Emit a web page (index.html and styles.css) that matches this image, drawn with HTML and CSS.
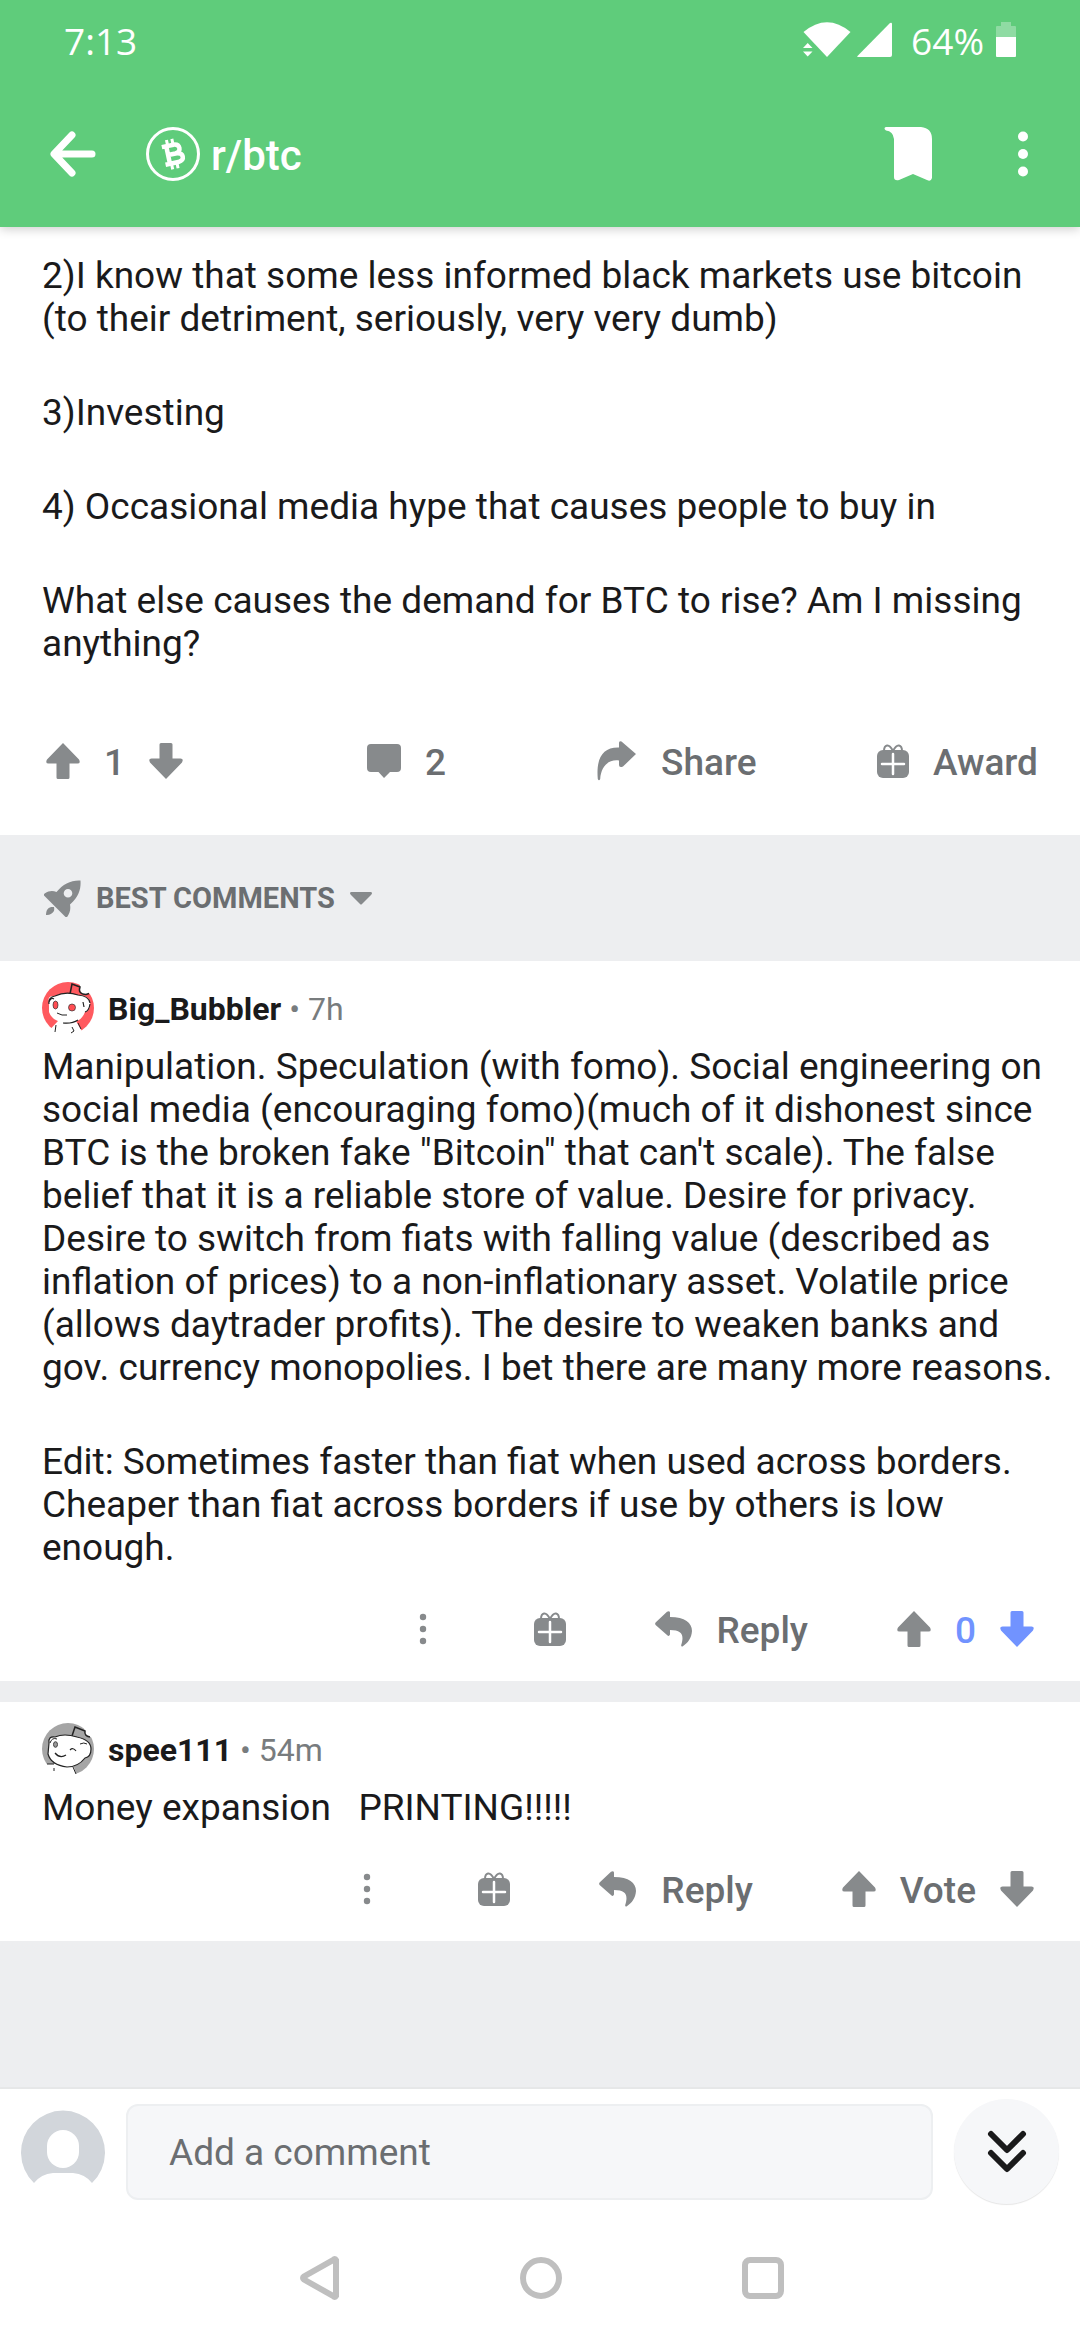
FILE: index.html
```html
<!DOCTYPE html>
<html lang="en">
<head>
<meta charset="utf-8">
<meta name="viewport" content="width=device-width, initial-scale=1">
<title>r/btc</title>
<link rel="stylesheet" href="styles.css">
</head>
<body>
<svg class="sprite" aria-hidden="true">
  <symbol id="up" viewBox="0 0 34 36"><path d="M17 0 33 16.500Q35 20.500 31.500 20.500H23.500V34.500Q23.500 36 22 36H12Q10.500 36 10.500 34.500V20.500H2.500Q-1 20.500 1 16.500Z"/></symbol>
  <symbol id="down" viewBox="0 0 34 36"><path d="M17 36 33 19.500Q35 15.500 31.500 15.500H23.500V1.500Q23.500 0 22 0H12Q10.500 0 10.500 1.500V15.500H2.500Q-1 15.500 1 19.500Z"/></symbol>
  <symbol id="bubble" viewBox="0 0 34 34"><path d="M4 0H30Q34 0 34 4V24Q34 28 30 28H23L17 34 11.500 28H4Q0 28 0 24V4Q0 0 4 0Z"/></symbol>
  <symbol id="share" viewBox="0 0 40 40"><path d="M22 2Q22 -.5 24.500 .6L39 13 26 25.500Q22 27 22 24V19.500C11 18 4 26 3.200 38Q2 40.500 .8 38C-1 18 5 6 22 6.500Z"/></symbol>
  <symbol id="reply" viewBox="0 0 38 36"><path d="M15 1.500V6C30 6 37 12 37 20C36.500 27 33 32 27.500 35.500Q26 36 26.200 34C29 25 28 19 15 19V23.500Q14 26 12 24L.6 14Q-.4 12.800 .6 11.500L12 .8Q14.500 -.8 15 1.500Z"/></symbol>
  <symbol id="gift" viewBox="0 0 32 34"><rect y="6" width="32" height="28" rx="6"/><path d="M7 7Q7 2 10 1.500Q13 1 16 7Q19 1 22 1.500Q25 2 25 7" fill="none" stroke="currentColor" stroke-width="2"/><path d="M5 20H27M16 10V30" stroke="#fff" stroke-width="2.500" stroke-linecap="round"/></symbol>
  <symbol id="dots" viewBox="0 0 8 32"><circle cx="4" cy="4" r="3.200"/><circle cx="4" cy="16" r="3.200"/><circle cx="4" cy="28" r="3.200"/></symbol>
</svg>

<header class="top">
  <div class="status">
    <span>7:13</span>
    <div class="status-icons">
      <svg width="48" height="36" viewBox="0 0 48 36"><path d="M24 35 .5 10Q24-9.500 47.500 10Z"/><path d="M0 26 4.700 21 9.500 26ZM0 29.500H9.500L4.700 34.500Z" stroke="#5fcc7b" stroke-width="5" paint-order="stroke"/></svg>
      <svg width="36" height="36" viewBox="0 0 36 36"><path d="M0 34.500 33 1Q35 0 35 2V33Q35 35 33 35H1Z"/></svg>
      <span class="percent">64%</span>
      <svg width="20" height="36" viewBox="0 0 20 36"><path d="M0 15V5Q0 4 1 4H5V0H15V4H19Q20 4 20 5V15Z" opacity=".3"/><path d="M0 15H20V34Q20 35 19 35H1Q0 35 0 34Z"/></svg>
    </div>
  </div>
  <nav class="bar">
    <button class="plain" aria-label="Back"><svg width="46" height="46" viewBox="0 0 46 46"><path d="M22 4 4 23 22 42M5 23H42" fill="none" stroke="currentColor" stroke-width="7" stroke-linecap="round" stroke-linejoin="round"/></svg></button>
    <a class="sub" href="#">
      <svg width="54" height="54" viewBox="0 0 54 54"><circle cx="27" cy="27" r="25.500" fill="none" stroke="currentColor" stroke-width="3"/><g transform="rotate(-12 27 27)" fill="none" stroke="currentColor"><path d="M17.500 18H29.500Q34.500 18.500 34.500 22.500T29.500 27H22M29.500 27Q36 27.500 36 31.500T30.500 36H17.500M22 18V36" stroke-width="4.500"/><path d="M23.500 12V18M29 12V18M23.500 36V42M29 36V42" stroke-width="3"/></g></svg>
      <span>r/btc</span>
    </a>
    <button class="plain" aria-label="Save"><svg width="50" height="54" viewBox="0 0 50 54"><path d="M2 0H37Q48 1 48 12V51Q47 55 43 53L29 47 15 53Q10 54 10 50V12Q9 4 2 3.500Q-1 1 2 0Z"/></svg></button>
    <button class="plain more" aria-label="More options"><svg width="10" height="46" viewBox="0 0 10 46"><circle cx="5" cy="5.500" r="5"/><circle cx="5" cy="23" r="5"/><circle cx="5" cy="40.500" r="5"/></svg></button>
  </nav>
</header>

<main class="feed">
  <article class="post">
    <div class="copy">
      <p>2)I know that some less informed black markets use bitcoin (to their detriment, seriously, very very dumb)</p>
      <p>3)Investing</p>
      <p>4) Occasional media hype that causes people to buy in</p>
      <p>What else causes the demand for BTC to rise? Am I missing anything?</p>
    </div>
    <div class="post-actions">
      <div class="votes">
        <button class="plain" aria-label="Upvote"><svg width="34" height="36"><use href="#up"/></svg></button>
        <span>1</span>
        <button class="plain" aria-label="Downvote"><svg width="34" height="36"><use href="#down"/></svg></button>
      </div>
      <button class="plain action"><svg width="34" height="34"><use href="#bubble"/></svg>2</button>
      <button class="plain action"><svg width="40" height="40"><use href="#share"/></svg>Share</button>
      <button class="plain action"><svg width="32" height="34"><use href="#gift"/></svg>Award</button>
    </div>
  </article>

  <button class="plain sort">
    <svg width="37" height="37" viewBox="0 0 37 37"><path fill-rule="evenodd" d="M36.500 .5C37 8 35.500 16 26 24.500C27 30 25.500 33 23.500 36.500Q22 37.500 21 36.500L0 15.500Q-.5 14 1 13.300C5 10.500 9 10.500 12.500 12C19 4 27 0 36.500 .5ZM24 9A4.300 4.300 0 1 0 24 17.600A4.300 4.300 0 1 0 24 9Z"/><path d="M2 35C2 29 5 26.500 10 27Q10.500 29 10 31Q7 35.500 2 35Z"/></svg>
    BEST COMMENTS
    <svg width="22" height="13" viewBox="0 0 22 13"><path d="M1 0H21Q23 1 21 3L12 12Q11 13 10 12L1 3Q-1 1 1 0Z"/></svg>
  </button>

  <article class="comment">
    <header class="byline">
      <svg width="54" height="52" viewBox="0 0 54 52"><circle cx="26" cy="26" r="26" fill="#ff5a5f"/><path d="M38 3Q36 12 44 12.500L47 11.500L54 12V0H38Z" fill="#fff"/><path d="M28 12 30 2 38 5Q35.500 12 44 12.500L47 11.500" fill="none" stroke="#222" stroke-width="1.500"/><path d="M9 46.500 16 39H34L39.500 48.500L38 52H10Z" fill="#fff"/><path d="M7 20Q5 13 13 14Q22 9 36 13Q49 14 48 22Q48 29 43 30Q39 41 26 41Q10 40 7 30Z" fill="#fff"/><path d="M7 22Q6 15 13 14Q24 9 36 13Q47 14 48 21M48 22Q47 29 43 30M21 41Q30 42 36 38M7 20Q9 15 12 17M41 20 42 25" fill="none" stroke="#222" stroke-width="1.200"/><ellipse cx="13.500" cy="23" rx="2.500" ry="4" fill="#ff4d52" stroke="#333" stroke-width=".7"/><circle cx="30" cy="25.500" r="3.500" fill="#ff4d52" stroke="#333" stroke-width=".7"/><path d="M15 31Q20 34 25 33M14 43 13 50M36 41 39 47M30 45 32 49 29 51" fill="none" stroke="#222"/></svg>
      <a class="author" href="#">Big_Bubbler</a><span>• 7h</span>
    </header>
    <div class="copy">
      <p>Manipulation. Speculation (with fomo). Social engineering on social media (encouraging fomo)(much of it dishonest since BTC is the broken fake "Bitcoin" that can't scale). The false belief that it is a reliable store of value. Desire for privacy. Desire to switch from fiats with falling value (described as inflation of prices) to a non-inflationary asset. Volatile price (allows daytrader profits). The desire to weaken banks and gov. currency monopolies. I bet there are many more reasons.</p>
      <p>Edit: Sometimes faster than fiat when used across borders. Cheaper than fiat across borders if use by others is low enough.</p>
    </div>
    <div class="comment-actions">
      <button class="plain dots" aria-label="More"><svg width="8" height="32"><use href="#dots"/></svg></button>
      <button class="plain" aria-label="Award"><svg width="32" height="34"><use href="#gift"/></svg></button>
      <button class="plain action"><svg width="38" height="36"><use href="#reply"/></svg>Reply</button>
      <div class="votes">
        <button class="plain" aria-label="Upvote"><svg width="34" height="36"><use href="#up"/></svg></button>
        <span class="voted">0</span>
        <button class="plain voted" aria-label="Downvote"><svg width="34" height="36"><use href="#down"/></svg></button>
      </div>
    </div>
  </article>

  <article class="comment">
    <header class="byline">
      <svg width="54" height="52" viewBox="0 0 54 52"><circle cx="26" cy="26" r="26" fill="#a5a5a5"/><path d="M42 5 43 8Q42 13 48 14H54V0H42Z" fill="#fff"/><path d="M30 13 33 4 43 8Q42 13 48 14" fill="none" stroke="#222" stroke-width="1.500"/><path d="M4 41H31L34.500 52H8Z" fill="#fff"/><path d="M7 20Q6 13 13 14Q22 10 35 14Q49 17 49 26Q49 34 43 35Q36 44 25 44Q9 42 6 31Z" fill="#fff" stroke="#222" stroke-width="1.200"/><path d="M8 20Q10 14 15 16M5 41H12M31 44 34 51M12 45V48M38 21Q42 19 45 21" fill="none" stroke="#222"/><ellipse cx="13.500" cy="21.500" rx="2" ry="2.800" fill="#999" stroke="#444"/><path d="M13 30Q18 36 24 32M28 27Q31 24 34 28" fill="none" stroke="#222" stroke-width="1.200"/></svg>
      <a class="author" href="#">spee111</a><span>• 54m</span>
    </header>
    <div class="copy">
      <p>Money expansion &nbsp; PRINTING!!!!!</p>
    </div>
    <div class="comment-actions">
      <button class="plain dots" aria-label="More"><svg width="8" height="32"><use href="#dots"/></svg></button>
      <button class="plain" aria-label="Award"><svg width="32" height="34"><use href="#gift"/></svg></button>
      <button class="plain action"><svg width="38" height="36"><use href="#reply"/></svg>Reply</button>
      <div class="votes">
        <button class="plain" aria-label="Upvote"><svg width="34" height="36"><use href="#up"/></svg></button>
        <span>Vote</span>
        <button class="plain" aria-label="Downvote"><svg width="34" height="36"><use href="#down"/></svg></button>
      </div>
    </div>
  </article>
</main>

<footer class="bottom">
  <form class="composer">
    <svg width="84" height="84" viewBox="0 0 84 84"><path d="M13 73A42 42 0 1 1 71 73Q64 64 52 63H32Q20 64 13 73Z" fill="#d2d6db"/><rect x="26" y="20" width="32" height="38" rx="16" fill="#fff"/></svg>
    <input type="text" placeholder="Add a comment" aria-label="Add a comment">
    <button class="plain jump" type="button" aria-label="Next comment"><svg width="40" height="44" viewBox="0 0 40 44"><path d="M4 4 20 20 36 4M4 23 20 39 36 23" fill="none" stroke="currentColor" stroke-width="6" stroke-linecap="round" stroke-linejoin="round"/></svg></button>
  </form>
  <nav class="system">
    <button class="plain" aria-label="System back"><svg width="40" height="44" viewBox="0 0 40 44"><path d="M36 4V40Q35 42 33 40L4 23.500Q2 22 4 20.500L33 4Q35 2 36 4Z" fill="none" stroke="currentColor" stroke-width="6"/></svg></button>
    <button class="plain" aria-label="Home"><svg width="42" height="42" viewBox="0 0 42 42"><circle cx="21" cy="21" r="18" fill="none" stroke="currentColor" stroke-width="6"/></svg></button>
    <button class="plain" aria-label="Recent apps"><svg width="42" height="42" viewBox="0 0 42 42"><rect x="3" y="3" width="36" height="36" rx="5" fill="none" stroke="currentColor" stroke-width="6"/></svg></button>
  </nav>
</footer>
</body>
</html>
```
FILE: styles.css
```css
* {
  box-sizing: border-box;
}

body {
  margin: 0;
  min-height: 100vh;
  display: flex;
  flex-direction: column;
  background: #edeef0;
  color: #1a1a1b;
  font: 37px/43px Roboto, sans-serif;
}

svg {
  display: block;
  flex: none;
  fill: currentColor;
}

.sprite {
  position: absolute;
  width: 0;
  height: 0;
}

a {
  color: inherit;
  text-decoration: none;
}

p {
  margin: 0;
}

.plain {
  display: flex;
  align-items: center;
  padding: 0;
  border: 0;
  background: none;
  color: inherit;
  font: inherit;
}

/* Top bar */
.top {
  position: relative;
  background: #5fcc7b;
  color: #fff;
  box-shadow: 0 2px 10px rgba(0, 0, 0, 0.2);
}

.status {
  display: flex;
  align-items: center;
  justify-content: space-between;
  height: 80px;
  padding: 0 64px;
  font: 400 37px/43px "Open Sans", "Noto Sans", sans-serif;
}

.status-icons {
  display: flex;
  align-items: center;
  gap: 6px;
}

.percent {
  margin: 0 6px 0 12px;
}

.bar {
  display: flex;
  align-items: center;
  height: 147px;
  padding: 0 52px 0 50px;
}

.sub {
  flex: 1;
  display: flex;
  align-items: center;
  gap: 11px;
  margin-left: 50px;
  font-size: 42px;
  font-weight: 500;
}

.sub span {
  padding-top: 3px;
}

.more {
  margin-left: 84px;
}

/* Post */
.feed {
  flex: 1;
}

.post,
.comment {
  background: #fff;
}

.copy {
  display: grid;
  gap: 51px;
}

.post .copy {
  padding: 27px 42px 0;
}

.post-actions {
  display: grid;
  grid-template-columns: 321fr 230fr 280fr 162fr;
  align-items: center;
  height: 170px;
  padding: 25px 41px 0 46px;
}

.post-actions,
.comment-actions {
  color: #6b6e71;
  font-weight: 500;
}

.post-actions svg,
.comment-actions svg {
  margin-bottom: 3px;
  color: #878a8c;
}

.votes,
.action {
  display: flex;
  align-items: center;
  gap: 24px;
}

.sort {
  width: 100%;
  height: 126px;
  gap: 15px;
  padding: 0 44px;
  color: #6b6e71;
  font-size: 29px;
  font-weight: 700;
}

.sort svg {
  color: #878a8c;
}

/* Comments */
.comment + .comment {
  margin-top: 21px;
}

.byline {
  display: flex;
  align-items: center;
  gap: 8px;
  padding: 21px 42px 0;
  color: #787c7e;
  font-size: 32px;
}

.byline a,
.byline span {
  padding-top: 3px;
}

.author {
  margin-left: 4px;
  color: #1a1a1b;
  font-weight: 700;
}

.comment .copy {
  padding: 11px 20px 0 42px;
}

.comment-actions {
  display: flex;
  align-items: center;
  justify-content: flex-end;
  gap: 89px;
  height: 112px;
  padding: 10px 46px 0 42px;
}

.dots {
  margin-right: 18px;
}

.comment-actions .voted,
.comment-actions .voted svg {
  color: #7193ff;
}

/* Composer and system navigation */
.bottom {
  border-top: 2px solid #e6e7e8;
  background: #fff;
}

.composer {
  display: flex;
  align-items: center;
  gap: 21px;
  padding: 10px 21px 11px;
}

.composer input {
  flex: 1;
  min-width: 0;
  height: 96px;
  padding: 2px 41px 0;
  border: 2px solid #edeff1;
  border-radius: 12px;
  background: #f6f7f9;
  color: inherit;
  font: inherit;
}

.composer input::placeholder {
  color: #6b6e71;
  opacity: 1;
}

.jump {
  justify-content: center;
  width: 105px;
  height: 105px;
  border-radius: 50%;
  background: #f6f7f9;
  box-shadow: 0 1px 1px rgba(0, 0, 0, 0.1);
}

.system {
  display: flex;
  align-items: center;
  justify-content: center;
  gap: 180px;
  height: 125px;
  padding-left: 3px;
  color: #bfbfbf;
}
```
